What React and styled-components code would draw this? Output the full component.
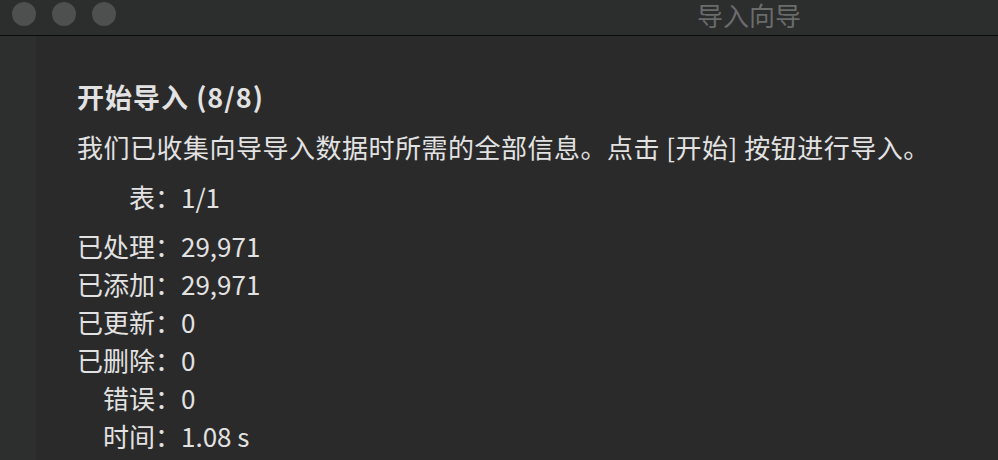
import React from "react";
import styled, { createGlobalStyle } from "styled-components";

const Global = createGlobalStyle`
  html, body { margin: 0; padding: 0; background: #2a2a2a; }
  body { font-family: "Noto Sans CJK SC", "Noto Sans", sans-serif; }
  #root { width: 998px; height: 460px; overflow: hidden; }
`;

const Window = styled.div`
  width: 998px;
  height: 460px;
  display: flex;
  flex-direction: column;
  background: #2a2a2a;
  overflow: hidden;
`;

const TitleBar = styled.div`
  height: 35px;
  flex: 0 0 35px;
  display: flex;
  align-items: flex-start;
  background: #2c2d2d;
  border-bottom: 1px solid #0b0b0b;
  padding-left: 12px;
`;

const Lights = styled.div`
  display: flex;
  gap: 16px;
  margin-top: 2px;
`;

const Light = styled.span`
  width: 24px;
  height: 24px;
  border-radius: 50%;
  background: #4e4f4f;
`;

const WindowTitle = styled.div`
  margin-left: 581px;
  font-size: 26px;
  line-height: 30px;
  color: #6a6b6b;
  white-space: nowrap;
`;

const Body = styled.div`
  flex: 1;
  display: flex;
`;

const Sidebar = styled.div`
  width: 36px;
  flex: 0 0 36px;
  background: #2d2f2f;
`;

const Content = styled.div`
  flex: 1;
  padding: 36px 0 0 41px;
  color: #e2e2e2;
  font-size: 26px;
`;

const Heading = styled.div`
  font-weight: 700;
  font-size: 27px;
  letter-spacing: 1px;
  line-height: 50px;
  white-space: nowrap;
`;

const Text = styled.div`
  line-height: 50px;
  letter-spacing: 0.5px;
  white-space: nowrap;
`;

const Stats = styled.div`
  display: grid;
  grid-template-columns: 104px auto;
  justify-content: start;
  margin-top: ${(p) => p.$gap || 0}px;
`;

const Label = styled.span`
  text-align: right;
  white-space: nowrap;
  line-height: ${(p) => p.$lh}px;
`;

const Value = styled.span`
  white-space: nowrap;
  line-height: ${(p) => p.$lh}px;
`;

const rows = [
  ["已处理：", "29,971"],
  ["已添加：", "29,971"],
  ["已更新：", "0"],
  ["已删除：", "0"],
  ["错误：", "0"],
  ["时间：", "1.08 s"],
];

export default function App() {
  return (
    <>
      <Global />
      <Window>
        <TitleBar>
          <Lights>
            <Light />
            <Light />
            <Light />
          </Lights>
          <WindowTitle>导入向导</WindowTitle>
        </TitleBar>
        <Body>
          <Sidebar />
          <Content>
            <Heading>开始导入 (8/8)</Heading>
            <Text>我们已收集向导导入数据时所需的全部信息。点击 [开始] 按钮进行导入。</Text>
            <Stats>
              <Label $lh={50}>表：</Label>
              <Value $lh={50}>1/1</Value>
            </Stats>
            <Stats $gap={5}>
              {rows.map(([l, v]) => (
                <React.Fragment key={l}>
                  <Label $lh={38}>{l}</Label>
                  <Value $lh={38}>{v}</Value>
                </React.Fragment>
              ))}
            </Stats>
          </Content>
        </Body>
      </Window>
    </>
  );
}
